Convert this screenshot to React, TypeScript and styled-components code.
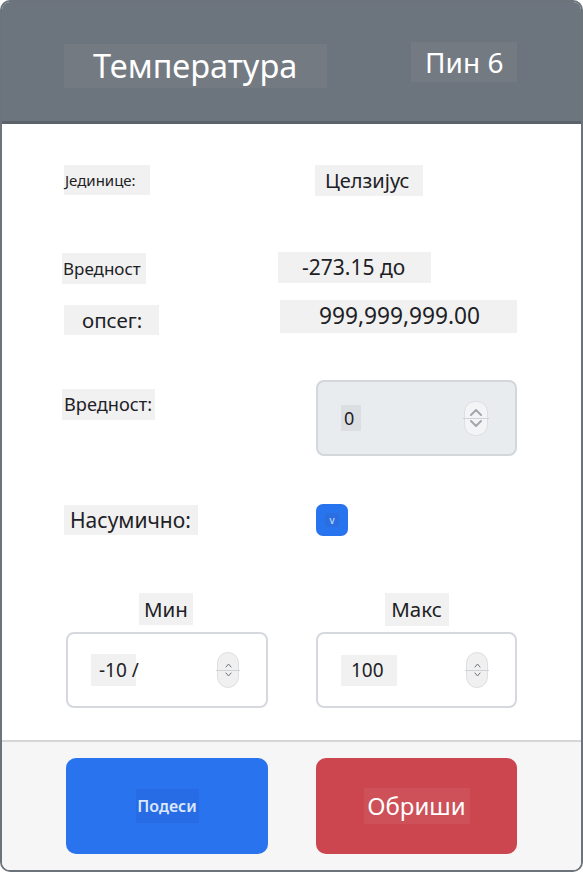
import React from 'react';
import styled, { createGlobalStyle } from 'styled-components';

const GlobalStyle = createGlobalStyle`
    html, body {
        margin: 0;
        padding: 0;
        background: #ffffff;
    }
    body {
        font-family: 'Noto Sans', 'Open Sans', sans-serif;
        color: #212529;
    }
    * {
        box-sizing: border-box;
    }
`;

const Card = styled.div`
    width: 583px;
    height: 872px;
    display: flex;
    flex-direction: column;
    border: 2px solid #6c737b;
    border-radius: 10px;
    overflow: hidden;
    background: #ffffff;
`;

const Header = styled.header`
    flex: none;
    height: 122px;
    display: flex;
    justify-content: space-between;
    align-items: flex-start;
    padding: 40px 64px 0 62px;
    background: #6c757d;
    border-bottom: 3px solid #5b6269;
`;

interface ChipProps {
    $size: number;
    $w: number;
    $h: number;
    $pl?: number;
    $bg?: string;
    $color?: string;
    $weight?: number;
    $mt?: number;
}

const Chip = styled.span<ChipProps>`
    display: inline-flex;
    align-items: center;
    justify-content: ${(p) => (p.$pl === undefined ? 'center' : 'flex-start')};
    width: ${(p) => p.$w}px;
    height: ${(p) => p.$h}px;
    margin-top: ${(p) => p.$mt ?? 0}px;
    padding-left: ${(p) => p.$pl ?? 0}px;
    font-size: ${(p) => p.$size}px;
    font-weight: ${(p) => p.$weight ?? 400};
    background: ${(p) => p.$bg ?? '#f1f1f1'};
    color: ${(p) => p.$color ?? '#1d2125'};
    white-space: nowrap;
    line-height: 1;
`;

const Body = styled.main`
    flex: 1;
    display: flex;
    flex-direction: column;
    padding: 0 64px 0 62px;
`;

const Row = styled.div<{ $mt: number }>`
    display: grid;
    grid-template-columns: 204px 201px;
    column-gap: 48px;
    align-items: start;
    margin-top: ${(p) => p.$mt}px;
`;

const Cell = styled.div<{ $dx?: number; $dy?: number; $center?: boolean }>`
    display: flex;
    justify-content: ${(p) => (p.$center ? 'center' : 'flex-start')};
    margin-left: ${(p) => p.$dx ?? 0}px;
    margin-top: ${(p) => p.$dy ?? 0}px;
`;

const NumberBox = styled.div<{ $disabled?: boolean; $w: number }>`
    width: ${(p) => p.$w}px;
    height: 76px;
    display: flex;
    align-items: center;
    justify-content: space-between;
    padding: 0 27px 0 23px;
    border: 2px solid ${(p) => (p.$disabled ? '#d3d7db' : '#d5d9de')};
    border-radius: 8px;
    background: ${(p) => (p.$disabled ? '#e9ecef' : '#ffffff')};
`;

const SpinnerPill = styled.div<{ $small?: boolean }>`
    position: relative;
    width: ${(p) => (p.$small ? 22 : 24)}px;
    height: ${(p) => (p.$small ? 36 : 35)}px;
    display: flex;
    flex-direction: column;
    align-items: center;
    justify-content: center;
    gap: 4px;
    border: 1px solid #dcdfe3;
    border-radius: 11px;
    background: ${(p) => (p.$small ? '#f0f0f0' : '#f3f4f5')};

    &::after {
        content: '';
        position: absolute;
        left: -2px;
        right: -2px;
        top: 50%;
        height: 1px;
        background: #cfd2d6;
    }
`;

const Check = styled.div`
    width: 32px;
    height: 32px;
    display: flex;
    align-items: center;
    justify-content: center;
    border-radius: 7px;
    background: #2873ee;
`;

const CheckMark = styled.span`
    width: 14px;
    height: 14px;
    display: flex;
    align-items: center;
    justify-content: center;
    background: #2a6ee2;
    color: #d3e2fb;
    font-size: 10px;
    line-height: 1;
`;

const Footer = styled.footer`
    flex: none;
    height: 130px;
    display: grid;
    grid-template-columns: 202px 201px;
    column-gap: 48px;
    align-items: start;
    padding: 16px 64px 0 64px;
    background: #f6f6f6;
    border-top: 2px solid #d5d6d7;
`;

const ActionButton = styled.button<{ $bg: string }>`
    height: 96px;
    display: flex;
    align-items: center;
    justify-content: center;
    border: none;
    border-radius: 10px;
    background: ${(p) => p.$bg};
    font-family: inherit;
    padding: 0;
`;

const Chevron: React.FC<{ up?: boolean; small?: boolean }> = ({ up, small }) => {
    const w = small ? 7 : 12;
    const h = small ? 5 : 7;
    const d = up ? `M1 ${h - 1} L${w / 2} 1 L${w - 1} ${h - 1}` : `M1 1 L${w / 2} ${h - 1} L${w - 1} 1`;
    return (
        <svg width={w} height={h} viewBox={`0 0 ${w} ${h}`}>
            <path
                d={d}
                fill="none"
                stroke={small ? '#6f7378' : '#a3a8ad'}
                strokeWidth={small ? 1 : 2}
                strokeLinecap="round"
                strokeLinejoin="round"
            />
        </svg>
    );
};

const Spinner: React.FC<{ small?: boolean }> = ({ small }) => (
    <SpinnerPill $small={small}>
        <Chevron up small={small} />
        <Chevron small={small} />
    </SpinnerPill>
);

const App: React.FC = () => (
    <>
        <GlobalStyle />
        <Card>
            <Header>
                <Chip $size={32.5} $w={263} $h={44} $pl={29} $mt={2} $bg="#737a81" $color="#ffffff">
                    Температура
                </Chip>
                <Chip $size={28} $w={106} $h={40} $pl={14} $bg="#737a81" $color="#ffffff">
                    Пин 6
                </Chip>
            </Header>
            <Body>
                <Row $mt={41}>
                    <Cell>
                        <Chip $size={15} $w={86} $h={30} $pl={1}>Јединице:</Chip>
                    </Cell>
                    <Cell $dx={-1}>
                        <Chip $size={20} $w={108} $h={31} $pl={10}>Целзијус</Chip>
                    </Cell>
                </Row>
                <Row $mt={56}>
                    <Cell $dx={-2} $dy={1}>
                        <Chip $size={17} $w={84} $h={31} $pl={1}>Вредност</Chip>
                    </Cell>
                    <Cell $dx={-38}>
                        <Chip $size={21} $w={153} $h={31} $pl={24}>-273.15 до</Chip>
                    </Cell>
                </Row>
                <Row $mt={16}>
                    <Cell $dy={5}>
                        <Chip $size={20.5} $w={95} $h={30} $pl={18}>опсег:</Chip>
                    </Cell>
                    <Cell $dx={-36}>
                        <Chip $size={22.7} $w={240} $h={33} $pl={39}>999,999,999.00</Chip>
                    </Cell>
                </Row>
                <Row $mt={45}>
                    <Cell $dx={-2} $dy={9}>
                        <Chip $size={18.2} $w={93} $h={31} $pl={2}>Вредност:</Chip>
                    </Cell>
                    <Cell>
                        <NumberBox $disabled $w={201}>
                            <Chip $size={18} $w={20} $h={26} $pl={3} $bg="#dcdfe2">0</Chip>
                            <Spinner />
                        </NumberBox>
                    </Cell>
                </Row>
                <Row $mt={48}>
                    <Cell $dy={1}>
                        <Chip $size={21} $w={134} $h={30} $pl={6}>Насумично:</Chip>
                    </Cell>
                    <Cell>
                        <Check>
                            <CheckMark>v</CheckMark>
                        </Check>
                    </Cell>
                </Row>
                <Row $mt={57}>
                    <Cell $center>
                        <Chip $size={20.5} $w={54} $h={32}>Мин</Chip>
                    </Cell>
                    <Cell $center>
                        <Chip $size={20.5} $w={64} $h={33}>Макс</Chip>
                    </Cell>
                </Row>
                <Row $mt={6}>
                    <Cell $dx={2}>
                        <NumberBox $w={202}>
                            <Chip $size={19} $w={45} $h={32} $pl={8}>-10 /</Chip>
                            <Spinner small />
                        </NumberBox>
                    </Cell>
                    <Cell>
                        <NumberBox $w={201}>
                            <Chip $size={19} $w={56} $h={31} $pl={10}>100</Chip>
                            <Spinner small />
                        </NumberBox>
                    </Cell>
                </Row>
            </Body>
            <Footer>
                <ActionButton $bg="#2973ef">
                    <Chip $size={16} $w={63} $h={34} $weight={600} $bg="#276ce4" $color="#dbe7fc">
                        Подеси
                    </Chip>
                </ActionButton>
                <ActionButton $bg="#cb464f">
                    <Chip $size={24} $w={106} $h={36} $bg="#ce5058" $color="#ffffff">
                        Обриши
                    </Chip>
                </ActionButton>
            </Footer>
        </Card>
    </>
);

export default App;
